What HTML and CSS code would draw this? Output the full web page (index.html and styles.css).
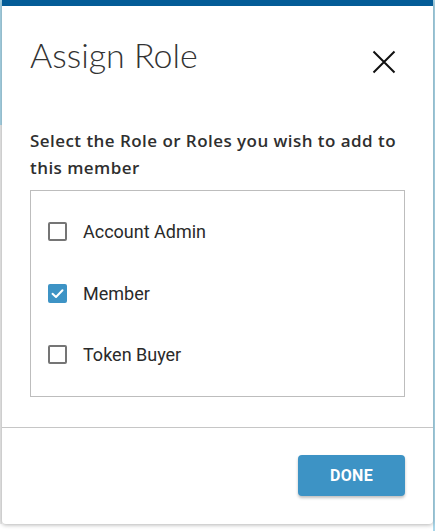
FILE: index.html
```html
<!DOCTYPE html>
<html lang="en">
<head>
<meta charset="utf-8">
<title>Assign Role</title>
<link rel="stylesheet" href="styles.css">
</head>
<body>
<div class="dialog">
  <div class="topbar"></div>
  <div class="header">
    <h1 class="title">Assign Role</h1>
    <button class="close" aria-label="Close">
      <svg width="24" height="24" viewBox="0 0 24 24"><path d="M1.5 1.5 L22.5 22.5 M22.5 1.5 L1.5 22.5" stroke="#111" stroke-width="2" fill="none"/></svg>
    </button>
  </div>
  <div class="content">
    <p class="prompt">Select the Role or Roles you wish to add to this member</p>
    <div class="roles">
      <label class="role">
        <span class="check"></span>
        <span class="role-name">Account Admin</span>
      </label>
      <label class="role">
        <span class="check checked">
          <svg width="15" height="15" viewBox="0 0 15 15"><path d="M2.5 7.8 L6 11 L12.5 4.2" stroke="#fff" stroke-width="2" fill="none" stroke-linecap="round" stroke-linejoin="round"/></svg>
        </span>
        <span class="role-name">Member</span>
      </label>
      <label class="role">
        <span class="check"></span>
        <span class="role-name">Token Buyer</span>
      </label>
    </div>
  </div>
  <div class="footer">
    <button class="done">DONE</button>
  </div>
</div>
</body>
</html>
```
FILE: styles.css
```css
html, body {
  margin: 0;
  padding: 0;
}
body {
  background:
    linear-gradient(#a9d6e9, #a9d6e9) right top / 2px 100% no-repeat,
    linear-gradient(#a9d6e9 0, #a9d6e9 125px, #ebebeb 125px, #ebebeb 100%) left top / 2px 524px no-repeat,
    #ffffff;
  height: 531px;
  overflow: hidden;
}
.dialog {
  margin: 0 2px;
  background: #fff;
  border-radius: 0 0 4px 4px;
  box-shadow: 0 1px 4px rgba(0, 0, 0, 0.3);
  display: flex;
  flex-direction: column;
}
.topbar {
  height: 6px;
  background: #045c97;
}
.header {
  display: flex;
  justify-content: space-between;
  align-items: flex-start;
  padding: 29px 37px 0 28px;
}
.title {
  margin: 0;
  font-family: Lato, "Liberation Sans", sans-serif;
  font-weight: 300;
  font-size: 34px;
  line-height: 40px;
  color: #333;
}
.close {
  margin-top: 15px;
  padding: 0;
  border: 0;
  background: none;
  width: 24px;
  height: 24px;
  display: block;
}
.close svg { display: block; }
.content {
  padding: 52px 28px 30px 28px;
}
.prompt {
  margin: 0 0 9px 0;
  font-family: "Open Sans", "Liberation Sans", sans-serif;
  font-weight: 600;
  font-size: 17px;
  letter-spacing: 0.45px;
  line-height: 27px;
  color: #2f2f2f;
}
.roles {
  border: 1px solid #bdbdbd;
  padding: 10px 0;
  display: flex;
  flex-direction: column;
}
.role {
  height: 61.5px;
  display: flex;
  align-items: center;
  padding-left: 17px;
  gap: 16px;
}
.check {
  width: 19px;
  height: 19px;
  box-sizing: border-box;
  border: 2px solid #757575;
  border-radius: 2px;
  display: flex;
  align-items: center;
  justify-content: center;
}
.check.checked {
  background: #3d93c5;
  border-color: #3d93c5;
}
.check svg { display: block; }
.role-name {
  font-family: Roboto, "Liberation Sans", sans-serif;
  font-size: 18px;
  color: #2a2a2a;
}
.footer {
  border-top: 1px solid #c6c6c6;
  display: flex;
  justify-content: flex-end;
  padding: 27px 28px 28px 28px;
}
.done {
  width: 107px;
  height: 41px;
  border: 0;
  border-radius: 4px;
  background: #3d93c5;
  color: #fff;
  font-family: Roboto, "Liberation Sans", sans-serif;
  font-weight: 700;
  font-size: 16px;
  letter-spacing: 0.3px;
  box-shadow: 0 2px 3px rgba(0, 0, 0, 0.25);
}
```
